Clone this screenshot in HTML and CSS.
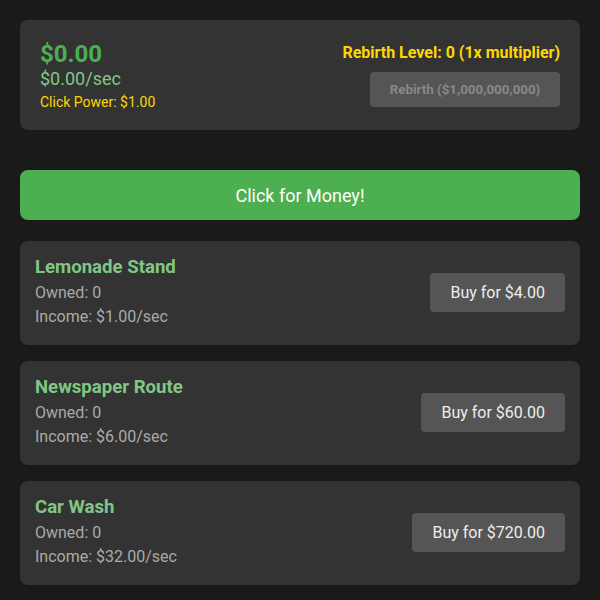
FILE: index.html
```html
<!DOCTYPE html>
<html>
<head>
<meta charset="utf-8">
<link rel="stylesheet" href="styles.css">
</head>
<body>
<div class="app">
  <div class="stats card">
    <div class="stats-left">
      <div class="money">$0.00</div>
      <div class="rate">$0.00/sec</div>
      <div class="power">Click Power: $1.00</div>
    </div>
    <div class="stats-right">
      <div class="rebirth-level">Rebirth Level: 0 (1x multiplier)</div>
      <button class="rebirth-btn">Rebirth ($1,000,000,000)</button>
    </div>
  </div>
  <button class="click-btn">Click for Money!</button>
  <div class="business card">
    <div class="info">
      <div class="name">Lemonade Stand</div>
      <div class="line">Owned: 0</div>
      <div class="line">Income: $1.00/sec</div>
    </div>
    <button class="buy-btn">Buy for $4.00</button>
  </div>
  <div class="business card">
    <div class="info">
      <div class="name">Newspaper Route</div>
      <div class="line">Owned: 0</div>
      <div class="line">Income: $6.00/sec</div>
    </div>
    <button class="buy-btn">Buy for $60.00</button>
  </div>
  <div class="business card">
    <div class="info">
      <div class="name">Car Wash</div>
      <div class="line">Owned: 0</div>
      <div class="line">Income: $32.00/sec</div>
    </div>
    <button class="buy-btn">Buy for $720.00</button>
  </div>
</div>
</body>
</html>
```
FILE: styles.css
```css
html, body {
  margin: 0;
  padding: 0;
  background: #1a1a1a;
  font-family: Roboto, "Liberation Sans", sans-serif;
  color: #e0e0e0;
}
.app {
  padding: 20px;
  display: flex;
  flex-direction: column;
}
.card {
  background: #333333;
  border-radius: 8px;
}
.stats {
  padding: 20px;
  display: flex;
  justify-content: space-between;
  align-items: flex-start;
  margin-bottom: 40px;
}
.money {
  font-size: 24px;
  font-weight: 700;
  color: #4caf50;
  line-height: 28px;
}
.rate {
  font-size: 18px;
  color: #81c784;
  line-height: 21px;
}
.power {
  font-size: 14px;
  color: #ffd700;
  margin-top: 5px;
  line-height: 16px;
}
.stats-right {
  display: flex;
  flex-direction: column;
  align-items: flex-end;
}
.rebirth-level {
  font-size: 16px;
  font-weight: 700;
  color: #ffd700;
  line-height: 19px;
  margin-top: 3px;
}
.rebirth-btn {
  margin-top: 10px;
  width: 190px;
  height: 35px;
  background: #555555;
  color: #888888;
  border: none;
  border-radius: 4px;
  font-family: inherit;
  font-size: 13.333px;
  font-weight: 700;
}
.click-btn {
  height: 50px;
  background: #4caf50;
  color: #ffffff;
  border: none;
  border-radius: 8px;
  font-family: inherit;
  font-size: 18px;
  margin-bottom: 21px;
}
.business {
  padding: 15px 15px 16px;
  display: flex;
  justify-content: space-between;
  align-items: center;
  margin-bottom: 16px;
}
.name {
  font-size: 18.6px;
  font-weight: 700;
  color: #81c784;
  line-height: 22px;
  margin-bottom: 3px;
}
.line {
  font-size: 16px;
  color: #aaaaaa;
  line-height: 24px;
}
.buy-btn {
  height: 39px;
  padding: 0 20px;
  background: #555555;
  color: #eeeeee;
  border: none;
  border-radius: 4px;
  font-family: inherit;
  font-size: 16px;
}
```
